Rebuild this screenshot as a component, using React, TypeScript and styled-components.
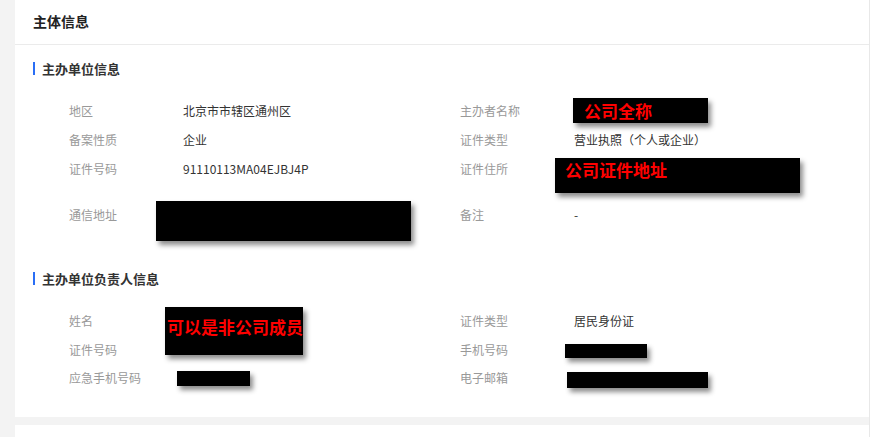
import React from "react";
import styled, { createGlobalStyle } from "styled-components";

const Global = createGlobalStyle`
  html, body { margin: 0; padding: 0; height: 100%; overflow: hidden; }
  body { font-family: "Noto Sans CJK SC", "Noto Sans", sans-serif; background: #f3f3f3; }
  * { box-sizing: border-box; }
`;

const Page = styled.div`
  display: flex;
  height: 100vh;
  overflow: hidden;
`;

const Gutter = styled.div`
  width: 15px;
  flex: none;
  background: #f3f3f3;
`;

const Side = styled.div`
  width: 16px;
  flex: none;
  background: #ffffff;
  border-left: 1px solid #e8e8e8;
`;

const Main = styled.div`
  flex: 1;
  display: flex;
  flex-direction: column;
  gap: 8px;
  background: #f3f3f3;
`;

const Card = styled.div<{ $h?: number }>`
  background: #ffffff;
  flex: none;
  ${(p) => (p.$h ? `height: ${p.$h}px;` : "")}
`;

const CardHeader = styled.div`
  height: 45px;
  line-height: 42px;
  padding-left: 18px;
  border-bottom: 1px solid #ebebeb;
  font-size: 14px;
  font-weight: 700;
  color: #222;
`;

const CardBody = styled.div`
  padding: 0 18px 24px;
`;

const SectionTitle = styled.div<{ $mt: number }>`
  display: flex;
  align-items: center;
  gap: 7px;
  margin-top: ${(p) => p.$mt}px;
  height: 20px;
  font-size: 13px;
  font-weight: 700;
  color: #333;
  &::before {
    content: "";
    width: 2px;
    height: 13px;
    background: #2a6ef5;
  }
`;

const Rows = styled.div<{ $mt: number }>`
  margin-top: ${(p) => p.$mt}px;
  padding-left: 36px;
`;

const Row = styled.div<{ $h: number }>`
  display: grid;
  grid-template-columns: 391px 1fr;
  height: ${(p) => p.$h}px;
`;

const Cell = styled.div`
  display: flex;
  align-items: flex-start;
  font-size: 12px;
  line-height: 28px;
`;

const Label = styled.div`
  width: 114px;
  flex: none;
  color: #999;
`;

const Value = styled.div`
  position: relative;
  flex: 1;
  color: #333;
`;

const Redact = styled.div<{ $l: number; $t: number; $w: number; $h: number; $pl?: number; $lh?: number }>`
  position: absolute;
  left: ${(p) => p.$l}px;
  top: ${(p) => p.$t}px;
  width: ${(p) => p.$w}px;
  height: ${(p) => p.$h}px;
  background: #000;
  box-shadow: 3px 4px 5px rgba(0, 0, 0, 0.45);
  padding-left: ${(p) => p.$pl ?? 0}px;
  color: #ff0000;
  font-size: 17px;
  font-weight: 700;
  line-height: ${(p) => p.$lh ?? 24}px;
  white-space: nowrap;
`;

type Item = { label: string; value?: React.ReactNode };

const Field = ({ label, value }: Item) => (
  <Cell>
    <Label>{label}</Label>
    <Value>{value}</Value>
  </Cell>
);

export default function App() {
  return (
    <>
      <Global />
      <Page>
        <Gutter />
        <Main>
          <Card>
            <CardHeader>主体信息</CardHeader>
            <CardBody>
              <SectionTitle $mt={13}>主办单位信息</SectionTitle>
              <Rows $mt={19}>
                <Row $h={29}>
                  <Field label="地区" value="北京市市辖区通州区" />
                  <Field
                    label="主办者名称"
                    value={<Redact $l={-1} $t={1} $w={135} $h={25} $pl={11} $lh={25}>公司全称</Redact>}
                  />
                </Row>
                <Row $h={29}>
                  <Field label="备案性质" value="企业" />
                  <Field label="证件类型" value="营业执照（个人或企业）" />
                </Row>
                <Row $h={46}>
                  <Field label="证件号码" value="91110113MA04EJBJ4P" />
                  <Field
                    label="证件住所"
                    value={<Redact $l={-19} $t={3} $w={245} $h={35} $pl={10} $lh={23}>公司证件地址</Redact>}
                  />
                </Row>
                <Row $h={46}>
                  <Field label="通信地址" value={<Redact $l={-27} $t={0} $w={255} $h={40} />} />
                  <Field label="备注" value="-" />
                </Row>
              </Rows>

              <SectionTitle $mt={21}>主办单位负责人信息</SectionTitle>
              <Rows $mt={19}>
                <Row $h={29}>
                  <Field
                    label="姓名"
                    value={<Redact $l={-18} $t={0} $w={138} $h={48} $pl={2} $lh={40}>可以是非公司成员</Redact>}
                  />
                  <Field label="证件类型" value="居民身份证" />
                </Row>
                <Row $h={28}>
                  <Field label="证件号码" />
                  <Field label="手机号码" value={<Redact $l={-9} $t={8} $w={82} $h={14} />} />
                </Row>
                <Row $h={29}>
                  <Field label="应急手机号码" value={<Redact $l={-6} $t={7} $w={73} $h={15} />} />
                  <Field label="电子邮箱" value={<Redact $l={-7} $t={8} $w={141} $h={16} />} />
                </Row>
              </Rows>
            </CardBody>
          </Card>
          <Card $h={200} />
        </Main>
        <Side />
      </Page>
    </>
  );
}
